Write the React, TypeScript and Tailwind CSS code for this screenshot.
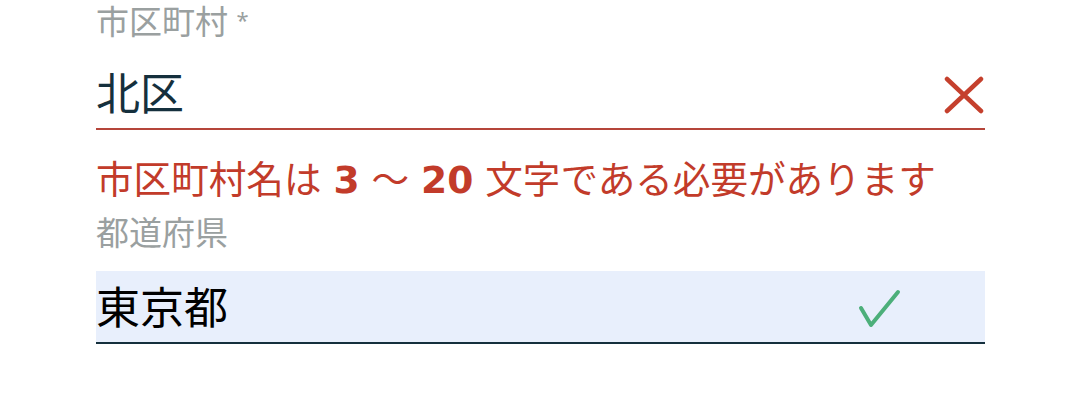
import React from 'react';

const FONT = { fontFamily: '"Noto Sans", "Noto Sans CJK JP", sans-serif' };
const NUM = { fontFamily: '"DejaVu Sans", "Noto Sans CJK JP", sans-serif' };

export default function App() {
  return (
    <div className="w-[1080px] h-[394px] bg-white overflow-hidden pt-[2px]" style={FONT}>
      <div className="ml-[96px] w-[889px] flex flex-col">
        {/* City field */}
        <label className="text-[33px] leading-[40px] text-[#9aa0a0]">
          市区町村 <span className="text-[22px] align-top leading-[34px]">*</span>
        </label>
        <div className="mt-[15px] h-[73px] flex items-center justify-between border-b-2 border-[#b5453a]">
          <span className="text-[44px] leading-none text-[#15303d]">北区</span>
          <svg width="40" height="38" viewBox="0 0 40 38" className="mr-[1px] mt-[4px]">
            <path d="M3 3 L37 35 M37 3 L3 35" stroke="#c5402d" strokeWidth="4.5" strokeLinecap="round" />
          </svg>
        </div>
        <p className="mt-[27px] text-[37.6px] leading-[44px] text-[#c23b2a] whitespace-nowrap">
          市区町村名は
          <span style={NUM}>
            {' '}<span className="font-bold">3</span> ～ <span className="font-bold">20</span>{' '}
          </span>
          文字である必要があります
        </p>

        {/* Prefecture field */}
        <label className="mt-[11px] text-[33px] leading-[40px] text-[#9aa0a0]">都道府県</label>
        <div className="mt-[18px] h-[73px] flex items-center justify-between bg-[#e8effc] border-b-2 border-[#15303d]">
          <span className="text-[44px] leading-none text-black">東京都</span>
          <svg width="44" height="40" viewBox="0 0 44 40" className="mr-[84px] mt-[4px]">
            <path d="M4 19 L14 36 L41 3" stroke="#4caf7a" strokeWidth="4" fill="none" strokeLinecap="round" strokeLinejoin="round" />
          </svg>
        </div>
      </div>
    </div>
  );
}
